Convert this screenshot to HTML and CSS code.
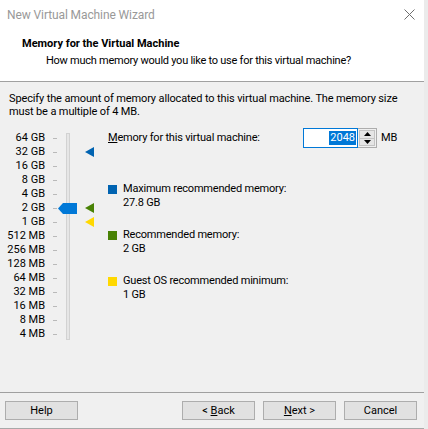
FILE: index.html
```html
<!DOCTYPE html>
<html>
<head>
<meta charset="utf-8">
<link rel="stylesheet" href="styles.css">
</head>
<body>
<div class="window">
  <div class="titlebar">
    <span class="title">New Virtual Machine Wizard</span>
    <svg class="close" width="11" height="11" viewBox="0 0 11 11"><path d="M0.5 0.5 L10.5 10.5 M10.5 0.5 L0.5 10.5" stroke="#6e6e6e" stroke-width="1" fill="none"/></svg>
  </div>
  <div class="header">
    <div class="h-title">Memory for the Virtual Machine</div>
    <div class="h-sub">How much memory would you like to use for this virtual machine?</div>
  </div>
  <div class="body">
    <p class="intro">Specify the amount of memory allocated to this virtual machine. The memory size<br>must be a multiple of 4 MB.</p>
    <div class="content">
      <div class="scale">
        <span class="lbl">64 GB</span><span class="tick"></span>
        <span class="lbl">32 GB</span><span class="tick"></span><span class="arrow blue r2"></span>
        <span class="lbl">16 GB</span><span class="tick"></span>
        <span class="lbl">8 GB</span><span class="tick"></span>
        <span class="lbl">4 GB</span><span class="tick"></span>
        <span class="lbl">2 GB</span><span class="tick"></span><span class="arrow green r6"></span>
        <span class="lbl">1 GB</span><span class="tick"></span><span class="arrow yellow r7"></span>
        <span class="lbl">512 MB</span><span class="tick"></span>
        <span class="lbl">256 MB</span><span class="tick"></span>
        <span class="lbl">128 MB</span><span class="tick"></span>
        <span class="lbl">64 MB</span><span class="tick"></span>
        <span class="lbl">32 MB</span><span class="tick"></span>
        <span class="lbl">16 MB</span><span class="tick"></span>
        <span class="lbl">8 MB</span><span class="tick"></span>
        <span class="lbl">4 MB</span><span class="tick"></span>
        <span class="track"></span>
        <svg class="thumb" width="19" height="11" viewBox="0 0 19 11"><path d="M0 5.5 L5 0 L19 0 L19 11 L5 11 Z" fill="#0078d7"/></svg>
      </div>
      <div class="panel">
        <div class="mem-row">
          <span class="mem-label"><u>M</u>emory for this virtual machine:</span>
          <span class="input"><span class="sel">2048</span></span>
          <span class="spin">
            <span class="spin-btn"><svg width="7" height="4" viewBox="0 0 7 4"><path d="M3.5 0 L7 4 L0 4 Z" fill="#000"/></svg></span>
            <span class="spin-btn"><svg width="7" height="4" viewBox="0 0 7 4"><path d="M0 0 L7 0 L3.5 4 Z" fill="#000"/></svg></span>
          </span>
          <span class="unit">MB</span>
        </div>
        <div class="legend">
          <div class="item">
            <div class="item-head"><span class="sq sq-blue"></span>Maximum recommended memory:</div>
            <div class="item-val">27.8 GB</div>
          </div>
          <div class="item">
            <div class="item-head"><span class="sq sq-green"></span>Recommended memory:</div>
            <div class="item-val">2 GB</div>
          </div>
          <div class="item">
            <div class="item-head"><span class="sq sq-yellow"></span>Guest OS recommended minimum:</div>
            <div class="item-val">1 GB</div>
          </div>
        </div>
      </div>
    </div>
  </div>
  <div class="footer">
    <button class="btn">Help</button>
    <button class="btn push">&lt; <u>B</u>ack</button>
    <button class="btn"><u>N</u>ext &gt;</button>
    <button class="btn">Cancel</button>
  </div>
</div>
</body>
</html>
```
FILE: styles.css
```css
html, body {
  margin: 0;
  padding: 0;
  background: #ebebeb;
}
body {
  font-family: Roboto, "Noto Sans", sans-serif;
  font-size: 11px;
  letter-spacing: -0.2px;
  color: #000;
}
.window {
  width: 424px;
  height: 429px;
  background: #f0f0f0;
  display: flex;
  flex-direction: column;
  box-sizing: border-box;
  border-bottom: 1px solid #a8a8a8;
}
.titlebar {
  height: 30px;
  background: #fff;
  display: flex;
  align-items: center;
  justify-content: space-between;
  padding: 0 9px 0 7px;
}
.title {
  color: #999;
  font-size: 12px;
  line-height: 14px;
  letter-spacing: -0.1px;
}
.close {
  display: block;
  margin-top: -1px;
}
.header {
  background: #fff;
  border-bottom: 1px solid #a0a0a0;
  padding-top: 7px;
  box-sizing: border-box;
  height: 52px;
}
.h-title {
  font-weight: bold;
  line-height: 14px;
  padding-left: 22px;
  letter-spacing: 0;
}
.h-sub {
  line-height: 14px;
  margin-top: 3px;
  padding-left: 46px;
  letter-spacing: -0.25px;
}
.body {
  flex: 1;
  padding-top: 10px;
}
.intro {
  margin: 0;
  padding-left: 9px;
  line-height: 13px;
  white-space: nowrap;
  letter-spacing: -0.13px;
}
.content {
  display: flex;
  margin-top: 10px;
}
.scale {
  position: relative;
  display: grid;
  grid-template-columns: 45px 12px 13px 24px;
  grid-template-rows: repeat(15, 14px);
  padding-top: 3px;
  align-items: center;
}
.lbl {
  grid-column: 1;
  text-align: right;
  line-height: 14px;
  white-space: nowrap;
  letter-spacing: 0;
}
.tick {
  grid-column: 2;
  justify-self: end;
  width: 4px;
  height: 1px;
  background: #b9b9b9;
}
.track {
  grid-column: 3;
  grid-row: 1 / -1;
  justify-self: end;
  align-self: stretch;
  width: 2px;
  margin: 2px 0 1px;
  background: #e6e6e6;
  border: 1px solid #d2d2d2;
}
.arrow {
  grid-column: 4;
  justify-self: end;
  width: 0;
  height: 0;
  border-top: 5px solid transparent;
  border-bottom: 5px solid transparent;
  border-right: 9px solid #0063b1;
}
.arrow.r2 { grid-row: 2; }
.arrow.r6 { grid-row: 6; }
.arrow.r7 { grid-row: 7; }
.arrow.blue { border-right-color: #0063b1; }
.arrow.green { border-right-color: #498205; }
.arrow.yellow { border-right-color: #ffd800; }
.thumb {
  position: absolute;
  left: 58px;
  top: 75px;
}
.panel {
  margin-left: 14px;
  flex: 1;
}
.mem-row {
  display: flex;
  align-items: center;
  height: 20px;
}
.mem-label {
  width: 195px;
  line-height: 14px;
}
.input {
  width: 55px;
  height: 20px;
  box-sizing: border-box;
  border: 1px solid #0078d7;
  background: #fff;
  display: flex;
  align-items: center;
  justify-content: flex-end;
  padding-right: 1px;
}
.sel {
  background: #0078d7;
  color: #fff;
  line-height: 14px;
  padding: 0 1px;
  letter-spacing: 0;
}
.spin {
  width: 19px;
  height: 20px;
  box-sizing: border-box;
  border: 1px solid #adadad;
  border-left: none;
  display: flex;
  flex-direction: column;
  background: #f0f0f0;
}
.spin-btn {
  flex: 1;
  display: flex;
  align-items: center;
  justify-content: center;
  margin: 1px 1px 0;
  background: #e5e5e5;
  border: 1px solid #c4c4c4;
}
.spin-btn + .spin-btn {
  margin: 0 1px 1px;
  border-top: none;
}
.spin-btn svg { display: block; }
.unit {
  margin-left: 4px;
  line-height: 14px;
}
.legend {
  margin-top: 34px;
  display: flex;
  flex-direction: column;
  gap: 18px;
}
.item-head, .item-val {
  line-height: 14px;
}
.item-head {
  display: flex;
  align-items: center;
}
.item-val {
  padding-left: 15px;
}
.sq {
  width: 9px;
  height: 9px;
  margin-right: 6px;
  flex: none;
}
.sq-blue { background: #0063b1; }
.sq-green { background: #498205; }
.sq-yellow { background: #ffd800; }
.footer {
  border-top: 1px solid #a0a0a0;
  height: 36px;
  box-sizing: border-box;
  display: flex;
  align-items: flex-start;
  gap: 8px;
  padding: 8px 7px 0 5px;
  width: 424px;
}
.btn {
  width: 73px;
  height: 19px;
  box-sizing: border-box;
  border: 1px solid #adadad;
  background: #e1e1e1;
  font-family: inherit;
  font-size: 11px;
  color: #000;
  padding: 0;
  line-height: 14px;
}
.btn.push {
  margin-left: auto;
}
```
